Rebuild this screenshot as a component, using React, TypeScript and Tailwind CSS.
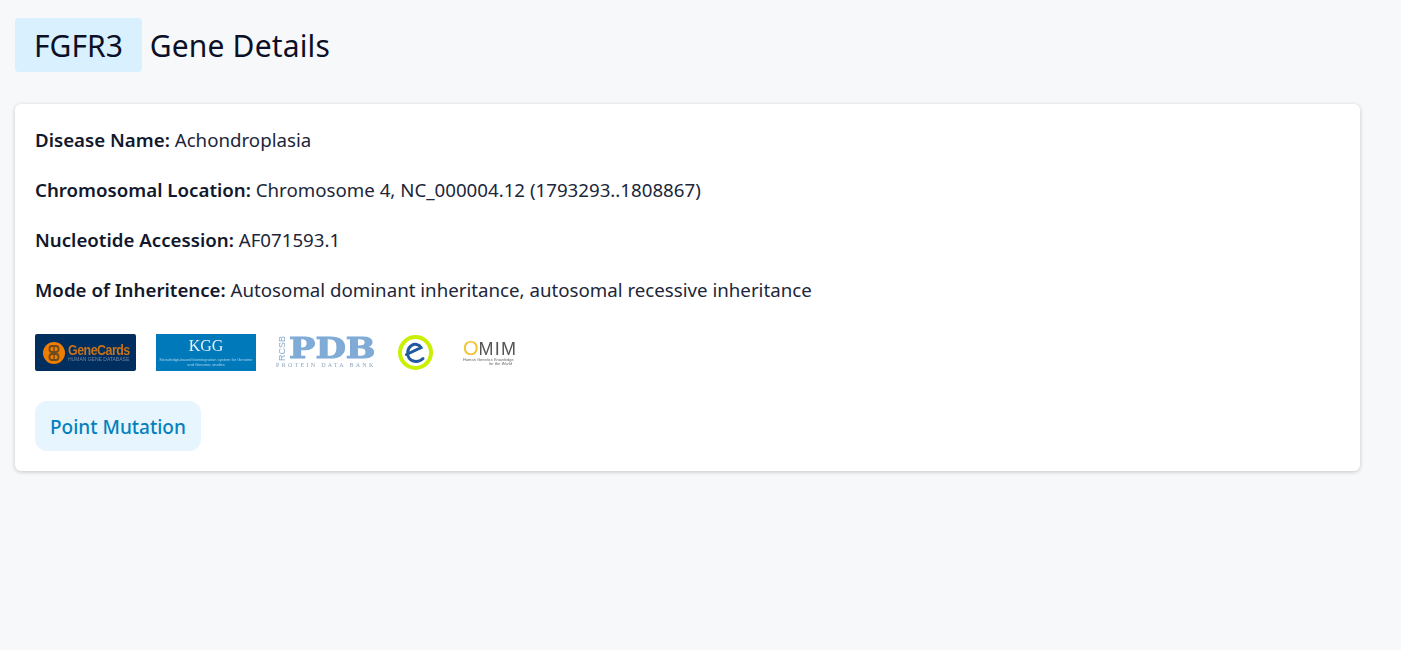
const body = { fontFamily: '"Noto Sans", "Open Sans", sans-serif' };
const sans = { fontFamily: '"Liberation Sans", sans-serif' };
const serif = { fontFamily: '"Liberation Serif", serif' };

function GeneCards() {
  return (
    <div className="flex h-[37px] w-[101px] items-center gap-[3px] rounded-[2px] bg-[#002f5f] pl-[8px] blur-[0.4px]">
      <svg width="22" height="22" viewBox="0 0 22 22" className="shrink-0">
        <circle cx="11" cy="11" r="11" fill="#ee7d00" />
        <rect x="6.5" y="4" width="9" height="6" rx="2.5" fill="none" stroke="#6b4a1e" strokeWidth="1.8" />
        <rect x="6.5" y="12" width="9" height="6" rx="2.5" fill="none" stroke="#6b4a1e" strokeWidth="1.8" />
        <path d="M11 3v16" stroke="#6b4a1e" strokeWidth="1.4" />
      </svg>
      <div className="flex flex-col leading-none" style={sans}>
        <span className="origin-left text-[14px] font-bold leading-[14px] tracking-[-0.6px] text-[#c8721a] [transform:scaleX(0.89)]">GeneCards</span>
        <span className="whitespace-nowrap text-[5px] leading-[5px] text-[#74859e]">HUMAN GENE DATABASE</span>
      </div>
    </div>
  );
}

function Kegg() {
  return (
    <div className="flex h-[37px] w-[100px] flex-col items-center justify-center bg-[#0079bb] blur-[0.3px]">
      <span className="text-[16px] leading-[16px] text-[#e6f2f9]" style={serif}>KGG</span>
      <span className="mt-[3px] whitespace-nowrap text-center text-[4px] leading-[5px] text-[#a9d3ea]" style={sans}>
        Knowledge-based biointegration system for Genome
        <br />
        and Genomic studies
      </span>
    </div>
  );
}

function Pdb() {
  return (
    <div className="flex h-[37px] w-[98px] flex-col justify-center blur-[0.3px]" style={sans}>
      <div className="flex items-center">
        <span className="w-[12px] rotate-180 text-[9px] leading-[12px] text-[#85a9cc] [writing-mode:vertical-rl]">RCSB</span>
        <span
          className="ml-[1px] origin-left text-[27px] font-bold leading-[21px] text-[#7fabd6] [-webkit-text-stroke:1px_#7fabd6] [transform:scaleX(1.3)]"
          style={{ fontFamily: '"DejaVu Serif", serif' }}
        >
          PDB
        </span>
      </div>
      <span className="mt-[1px] whitespace-nowrap text-[6px] leading-[7px] tracking-[2.3px] text-[#8fa6bd]" style={serif}>
        PROTEIN DATA BANK
      </span>
    </div>
  );
}

function Ensembl() {
  return (
    <svg width="37" height="37" viewBox="0 0 37 37" className="ml-[3px] blur-[0.3px]">
      <circle cx="18.5" cy="18.5" r="15.5" fill="#fff" stroke="#c8f000" strokeWidth="4" />
      <path
        d="M9.5 20.5 L24 13.5 C22 10 17.5 9.5 14.5 11.5 C10.5 14 9.5 20 12 24 C15 28.5 22 28.5 26 24.5"
        fill="none"
        stroke="#1f5aa0"
        strokeWidth="3"
        strokeLinecap="round"
      />
    </svg>
  );
}

function Omim() {
  return (
    <div className="ml-[9px] flex h-[37px] w-[55px] flex-col items-start justify-center blur-[0.3px]" style={sans}>
      <div className="flex items-end leading-none">
        <span className="text-[20px] leading-[17px] text-[#f2c230]">O</span>
        <span className="text-[18px] leading-[16px] tracking-[1.2px] text-[#555]">MIM</span>
      </div>
      <span className="mt-[1px] whitespace-nowrap text-[4px] leading-[4px] text-[#666]">Human Genetics Knowledge</span>
      <span className="ml-[26px] whitespace-nowrap text-[4px] italic leading-[4px] text-[#666]">for the World</span>
    </div>
  );
}

function Row({ label, value, mb }: { label: string; value: string; mb?: string }) {
  return (
    <p className={`text-[18.7px] leading-[26px] text-[#20263a] ${mb ?? "mb-6"}`}>
      <strong className="font-semibold text-[#12182c]">{label}</strong> {value}
    </p>
  );
}

export default function App() {
  return (
    <div className="min-h-[650px] bg-[#f7f8fa] pl-[15px] pr-[41px] pt-[18px]" style={body}>
      <div className="flex items-center">
        <span className="rounded-[4px] bg-[#d9f1fe] px-[19px] pt-[1px] text-[30px] leading-[53px] text-[#0b1027]">FGFR3</span>
        <span className="ml-2 pt-[1px] text-[30px] leading-[53px] tracking-[0.15px] text-[#0b1027]">Gene Details</span>
      </div>
      <div className="mt-8 rounded-[6px] bg-white p-5 pt-[23px] shadow-[0_1px_4px_rgba(0,0,0,0.2)]">
        <Row label="Disease Name:" value="Achondroplasia" />
        <Row label="Chromosomal Location:" value="Chromosome 4, NC_000004.12 (1793293..1808867)" />
        <Row label="Nucleotide Accession:" value="AF071593.1" />
        <Row label="Mode of Inheritence:" value="Autosomal dominant inheritance, autosomal recessive inheritance" mb="mb-[31px]" />
        <div className="flex items-center gap-5">
          <GeneCards />
          <Kegg />
          <Pdb />
          <Ensembl />
          <Omim />
        </div>
        <button className="mt-[30px] block h-[50px] rounded-xl bg-[#e6f5fe] px-[15px] pt-[2px] text-[19px] font-medium text-[#0480bd]">
          Point Mutation
        </button>
      </div>
    </div>
  );
}
